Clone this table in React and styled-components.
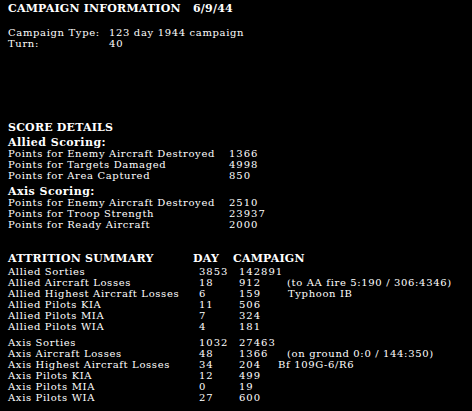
import React from "react";
import styled, { createGlobalStyle } from "styled-components";

const Global = createGlobalStyle`
  html, body { margin: 0; padding: 0; background: #000; }
  body { width: 472px; height: 411px; overflow: hidden; }
`;

const Page = styled.div`
  width: 472px;
  height: 411px;
  box-sizing: border-box;
  background: #000;
  color: #fff;
  padding: 3px 0 0 8px;
  font-family: "DejaVu Serif", "Liberation Serif", serif;
  font-size: 10px;
  line-height: 11px;
  letter-spacing: 0.65px;
`;

const Heading = styled.div`
  display: grid;
  grid-template-columns: ${(p) => p.$cols || "auto"};
  font-weight: bold;
  font-size: 11px;
  letter-spacing: 0.2px;
  margin-top: ${(p) => p.$top || 0}px;
  white-space: nowrap;
`;

const Sub = styled.div`
  font-weight: bold;
  font-size: 11px;
  letter-spacing: 0.45px;
  margin-top: ${(p) => p.$top || 0}px;
`;

const Row = styled.div`
  display: grid;
  grid-template-columns: ${(p) => p.$cols};
  margin-top: ${(p) => p.$top || 0}px;
  white-space: nowrap;
`;

const Num = styled.span`
  letter-spacing: 1px;
`;

const Note = styled.span`
  margin-left: ${(p) => p.$shift || 0}px;
`;

const HeadCell = styled.span`
  margin-left: ${(p) => p.$shift || 0}px;
`;

const Block = styled.div`
  margin-top: ${(p) => p.$top || 0}px;
`;

const allied = [
  ["Allied Sorties", "3853", "142891"],
  ["Allied Aircraft Losses", "18", "912", "(to AA fire 5:190 / 306:4346)", 0],
  ["Allied Highest Aircraft Losses", "6", "159", "Typhoon IB", 1],
  ["Allied Pilots KIA", "11", "506"],
  ["Allied Pilots MIA", "7", "324"],
  ["Allied Pilots WIA", "4", "181"],
];

const axis = [
  ["Axis Sorties", "1032", "27463"],
  ["Axis Aircraft Losses", "48", "1366", "(on ground 0:0 / 144:350)", 0],
  ["Axis Highest Aircraft Losses", "34", "204", "Bf 109G-6/R6", -9],
  ["Axis Pilots KIA", "12", "499"],
  ["Axis Pilots MIA", "0", "19"],
  ["Axis Pilots WIA", "27", "600"],
];

const ATTR_COLS = "191px 40px 48px auto";

function AttrRows({ rows }) {
  return rows.map(([label, day, camp, note, shift]) => (
    <Row key={label} $cols={ATTR_COLS}>
      <span>{label}</span>
      <Num>{day}</Num>
      <Num>{camp}</Num>
      {note ? <Note $shift={shift}>{note}</Note> : <span />}
    </Row>
  ));
}

const SCORE_COLS = "221px auto";

export default function App() {
  return (
    <Page>
      <Global />
      <Heading $cols="185px auto">
        <span>CAMPAIGN INFORMATION</span>
        <span>6/9/44</span>
      </Heading>
      <Block $top={13}>
        <Row $cols="101px auto">
          <span>Campaign Type:</span>
          <span>123 day 1944 campaign</span>
        </Row>
        <Row $cols="101px auto">
          <span>Turn:</span>
          <Num>40</Num>
        </Row>
      </Block>

      <Heading $top={73}>SCORE DETAILS</Heading>
      <Sub $top={4}>Allied Scoring:</Sub>
      <Row $cols={SCORE_COLS}>
        <span>Points for Enemy Aircraft Destroyed</span>
        <Num>1366</Num>
      </Row>
      <Row $cols={SCORE_COLS}>
        <span>Points for Targets Damaged</span>
        <Num>4998</Num>
      </Row>
      <Row $cols={SCORE_COLS}>
        <span>Points for Area Captured</span>
        <Num>850</Num>
      </Row>
      <Sub $top={5}>Axis Scoring:</Sub>
      <Row $cols={SCORE_COLS}>
        <span>Points for Enemy Aircraft Destroyed</span>
        <Num>2510</Num>
      </Row>
      <Row $cols={SCORE_COLS}>
        <span>Points for Troop Strength</span>
        <Num>23937</Num>
      </Row>
      <Row $cols={SCORE_COLS}>
        <span>Points for Ready Aircraft</span>
        <Num>2000</Num>
      </Row>

      <Heading $top={23} $cols="185px 40px auto">
        <span>ATTRITION SUMMARY</span>
        <HeadCell>DAY</HeadCell>
        <HeadCell>CAMPAIGN</HeadCell>
      </Heading>
      <Block $top={2}>
        <AttrRows rows={allied} />
      </Block>
      <Block $top={5}>
        <AttrRows rows={axis} />
      </Block>
    </Page>
  );
}
